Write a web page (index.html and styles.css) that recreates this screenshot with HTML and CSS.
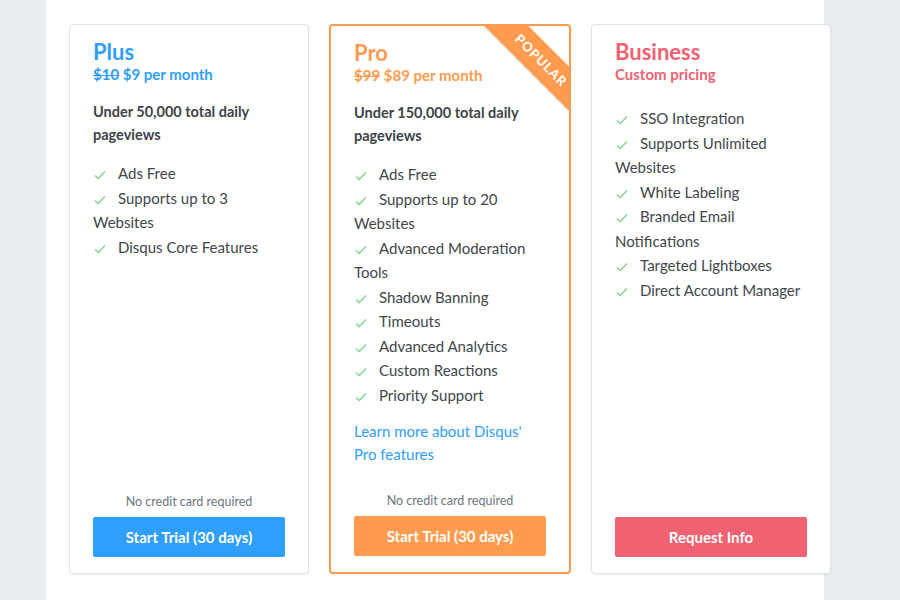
FILE: index.html
```html
<!DOCTYPE html>
<html lang="en">
<head>
<meta charset="utf-8">
<title>Pricing</title>
<link rel="stylesheet" href="styles.css">
</head>
<body>
<div class="page">
  <div class="plans">
    <div class="card plus">
      <h2 class="title">Plus</h2>
      <div class="price"><s>$10</s> $9 per month</div>
      <p class="desc">Under 50,000 total daily pageviews</p>
      <ul class="features">
        <li><svg class="check" viewBox="0 0 12 10"><path d="M1 5.5 L4.2 8.5 L11 1.5"/></svg>Ads Free</li>
        <li><svg class="check" viewBox="0 0 12 10"><path d="M1 5.5 L4.2 8.5 L11 1.5"/></svg>Supports up to 3 Websites</li>
        <li><svg class="check" viewBox="0 0 12 10"><path d="M1 5.5 L4.2 8.5 L11 1.5"/></svg>Disqus Core Features</li>
      </ul>
      <div class="footer">
        <div class="note">No credit card required</div>
        <a class="btn btn-plus" href="#">Start Trial (30 days)</a>
      </div>
    </div>
    <div class="card pro">
      <div class="ribbon">POPULAR</div>
      <h2 class="title">Pro</h2>
      <div class="price"><s>$99</s> $89 per month</div>
      <p class="desc">Under 150,000 total daily pageviews</p>
      <ul class="features">
        <li><svg class="check" viewBox="0 0 12 10"><path d="M1 5.5 L4.2 8.5 L11 1.5"/></svg>Ads Free</li>
        <li><svg class="check" viewBox="0 0 12 10"><path d="M1 5.5 L4.2 8.5 L11 1.5"/></svg>Supports up to 20 Websites</li>
        <li><svg class="check" viewBox="0 0 12 10"><path d="M1 5.5 L4.2 8.5 L11 1.5"/></svg>Advanced Moderation Tools</li>
        <li><svg class="check" viewBox="0 0 12 10"><path d="M1 5.5 L4.2 8.5 L11 1.5"/></svg>Shadow Banning</li>
        <li><svg class="check" viewBox="0 0 12 10"><path d="M1 5.5 L4.2 8.5 L11 1.5"/></svg>Timeouts</li>
        <li><svg class="check" viewBox="0 0 12 10"><path d="M1 5.5 L4.2 8.5 L11 1.5"/></svg>Advanced Analytics</li>
        <li><svg class="check" viewBox="0 0 12 10"><path d="M1 5.5 L4.2 8.5 L11 1.5"/></svg>Custom Reactions</li>
        <li><svg class="check" viewBox="0 0 12 10"><path d="M1 5.5 L4.2 8.5 L11 1.5"/></svg>Priority Support</li>
      </ul>
      <a class="learn" href="#">Learn more about Disqus' Pro features</a>
      <div class="footer">
        <div class="note">No credit card required</div>
        <a class="btn btn-pro" href="#">Start Trial (30 days)</a>
      </div>
    </div>
    <div class="card business">
      <h2 class="title">Business</h2>
      <div class="price">Custom pricing</div>
      <ul class="features features-biz">
        <li><svg class="check" viewBox="0 0 12 10"><path d="M1 5.5 L4.2 8.5 L11 1.5"/></svg>SSO Integration</li>
        <li><svg class="check" viewBox="0 0 12 10"><path d="M1 5.5 L4.2 8.5 L11 1.5"/></svg>Supports Unlimited Websites</li>
        <li><svg class="check" viewBox="0 0 12 10"><path d="M1 5.5 L4.2 8.5 L11 1.5"/></svg>White Labeling</li>
        <li><svg class="check" viewBox="0 0 12 10"><path d="M1 5.5 L4.2 8.5 L11 1.5"/></svg>Branded Email Notifications</li>
        <li><svg class="check" viewBox="0 0 12 10"><path d="M1 5.5 L4.2 8.5 L11 1.5"/></svg>Targeted Lightboxes</li>
        <li><svg class="check" viewBox="0 0 12 10"><path d="M1 5.5 L4.2 8.5 L11 1.5"/></svg>Direct Account Manager</li>
      </ul>
      <div class="footer">
        <a class="btn btn-biz" href="#">Request Info</a>
      </div>
    </div>
  </div>
</div>
</body>
</html>
```

FILE: styles.css
```css
* { box-sizing: border-box; }
html, body { margin: 0; padding: 0; }
body {
  background: #e9ecf1;
  font-family: Lato, "Open Sans", sans-serif;
  color: #3d4349;
  height: 600px;
  overflow: hidden;
}
.page {
  margin-left: 46px;
  width: 778px;
  height: 600px;
  background: #ffffff;
}
.plans {
  display: flex;
  gap: 20px;
  padding: 24px 0 0 23px;
}
.card {
  position: relative;
  flex: 0 0 auto;
  width: 240px;
  height: 550px;
  padding: 13px 23px 16px;
  border: 1px solid #dfe3ea;
  border-radius: 4px;
  background: #fff;
  box-shadow: 0 1px 2px rgba(40, 50, 70, 0.08);
  display: flex;
  flex-direction: column;
  overflow: hidden;
}
.card.pro {
  width: 242px;
  border: 2px solid #ff9b4f;
  padding-top: 13px;
}
.title {
  margin: 0;
  font-size: 22px;
  line-height: 28px;
  font-weight: 700;
}
.price {
  font-size: 15px;
  line-height: 16px;
  font-weight: 700;
}
.price s { text-decoration-thickness: 1px; }
.plus .title, .plus .price { color: #2f9efc; }
.pro .title, .pro .price { color: #ff9b4f; }
.business .title, .business .price { color: #f06272; }
.desc {
  margin: 18px 0 0;
  font-size: 14.5px;
  line-height: 23px;
  font-weight: 700;
  color: #3d4349;
}
.features {
  list-style: none;
  margin: 15px 0 0;
  padding: 0;
  font-size: 15px;
  line-height: 24.5px;
  color: #40464c;
}
.features-biz { margin-top: 24px; }
.check {
  width: 12px;
  height: 10px;
  margin: 0 12px 0 1px;
  vertical-align: -1px;
  fill: none;
  stroke: #82d291;
  stroke-width: 1.3;
}
.learn {
  display: block;
  margin-top: 13px;
  font-size: 15px;
  line-height: 22.5px;
  color: #2f9efc;
  text-decoration: none;
}
.footer {
  margin-top: auto;
}
.note {
  text-align: center;
  font-size: 12.5px;
  line-height: 16px;
  color: #6b7580;
  margin-bottom: 7px;
}
.btn {
  display: flex;
  align-items: center;
  justify-content: center;
  height: 40px;
  border-radius: 2px;
  color: #fff;
  font-size: 15px;
  font-weight: 700;
  text-decoration: none;
}
.btn-plus { background: #2f9efc; }
.btn-pro { background: #ff9b4f; }
.btn-biz { background: #f06272; }
.ribbon {
  position: absolute;
  top: 19px;
  left: 140px;
  width: 140px;
  height: 31px;
  line-height: 31px;
  text-align: center;
  background: #ff9b4f;
  color: #fff;
  font-size: 13px;
  font-weight: 700;
  letter-spacing: 1px;
  transform: rotate(45deg);
  box-shadow: 0 1px 1px rgba(60, 70, 90, 0.18);
}
```
